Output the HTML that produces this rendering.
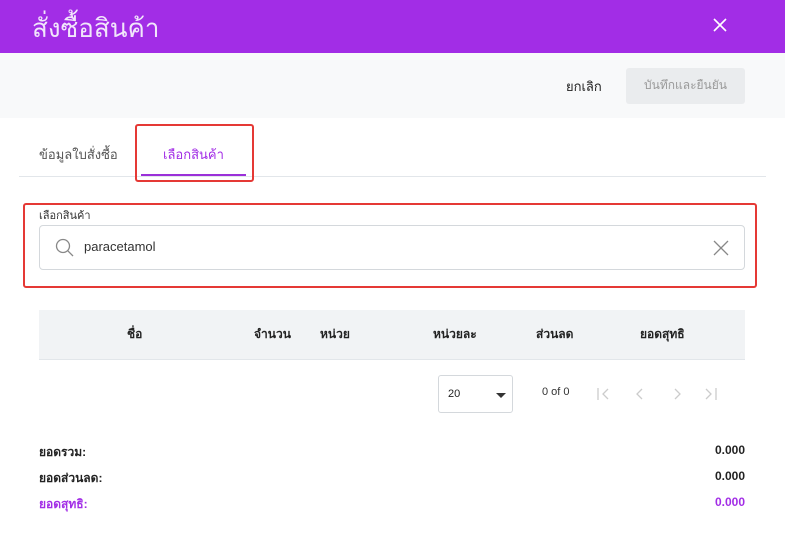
<!DOCTYPE html>
<html><head><meta charset="utf-8"><style>
*{box-sizing:border-box;margin:0;padding:0}
body{width:785px;height:559px;background:#fff;font-family:"Liberation Sans","Noto Sans CJK SC",sans-serif;position:relative;overflow:hidden;color:#222}
.hdr{position:absolute;left:0;top:0;width:785px;height:53px;background:#a22de6}
.hdr .t{position:absolute;left:32px;top:8px;font-size:26px;color:#f1e6fb}
.hdr .x{position:absolute;left:713px;top:18px}
.bar{position:absolute;left:0;top:53px;width:785px;height:65px;background:#f8f9fa}
.cancel{position:absolute;left:566px;top:76px;font-size:13px;color:#222}
.save{position:absolute;left:626px;top:68px;width:119px;height:36px;background:#eaecee;border-radius:3px;font-size:12px;color:#999;text-align:center;line-height:34px}
.tab1{position:absolute;left:39px;top:144px;font-size:13px;color:#555}
.tab2{position:absolute;left:163px;top:144px;font-size:13px;color:#a22de6}
.ul{position:absolute;left:141px;top:174px;width:105px;height:2px;background:#9b30d9}
.sep{position:absolute;left:19px;top:176px;width:747px;height:1px;background:#e2e6ea}
.red1{position:absolute;left:135px;top:124px;width:119px;height:58px;border:2px solid #e53935;border-radius:3px}
.red2{position:absolute;left:23px;top:203px;width:734px;height:85px;border:2px solid #e53935;border-radius:3px}
.lbl{position:absolute;left:39px;top:206px;font-size:11px;color:#333}
.inp{position:absolute;left:39px;top:225px;width:706px;height:45px;border:1px solid #d4d8dc;border-radius:4px}
.inp .v{position:absolute;left:44px;top:13px;font-size:13px;color:#333}
.th{position:absolute;left:39px;top:310px;width:706px;height:50px;background:#f1f3f5;border-bottom:1px solid #e2e6ea}
.th span{position:absolute;top:15px;font-size:12px;font-weight:bold;color:#222}
.sel{position:absolute;left:438px;top:375px;width:75px;height:38px;border:1px solid #d4d8dc;border-radius:3px}
.sel .n{position:absolute;left:9px;top:12px;font-size:11px}
.sel .a{position:absolute;left:57px;top:17px;width:0;height:0;border-left:5px solid transparent;border-right:5px solid transparent;border-top:5px solid #333}
.of{position:absolute;left:542px;top:386px;font-size:11px;color:#333}
.tot{position:absolute;font-size:12px;font-weight:bold;color:#222}
.r{right:40px;text-align:right}
</style></head><body>
<div class="hdr"><div class="t">สั่งซื้อสินค้า</div>
<svg class="x" width="14" height="14" viewBox="0 0 14 14"><path d="M1 1L13 13M13 1L1 13" stroke="#fff" stroke-width="1.6"/></svg></div>
<div class="bar"></div>
<div class="cancel">ยกเลิก</div>
<div class="save">บันทึกและยืนยัน</div>
<div class="tab1">ข้อมูลใบสั่งซื้อ</div>
<div class="tab2">เลือกสินค้า</div>
<div class="ul"></div>
<div class="sep"></div>
<div class="red1"></div>
<div class="red2"></div>
<div class="lbl">เลือกสินค้า</div>
<div class="inp">
<svg style="position:absolute;left:15px;top:12px" width="20" height="20" viewBox="0 0 20 20"><circle cx="8" cy="8" r="6.5" fill="none" stroke="#888" stroke-width="1.3"/><path d="M12.7 12.7L18 18" stroke="#888" stroke-width="1.3"/></svg>
<div class="v">paracetamol</div>
<svg style="position:absolute;left:672px;top:13px" width="18" height="18" viewBox="0 0 18 18"><path d="M2 2L16 16M16 2L2 16" stroke="#888" stroke-width="1.3"/></svg>
</div>
<div class="th">
<span style="left:88px">ชื่อ</span>
<span style="left:215px">จำนวน</span>
<span style="left:281px">หน่วย</span>
<span style="left:394px">หน่วยละ</span>
<span style="left:497px">ส่วนลด</span>
<span style="left:601px">ยอดสุทธิ</span>
</div>
<div class="sel"><div class="n">20</div><div class="a"></div></div>
<div class="of">0 of 0</div>
<svg style="position:absolute;left:596px;top:386px" width="130" height="16" viewBox="0 0 130 16" fill="none" stroke="#ccc" stroke-width="1.3">
<path d="M2 2V14M12 3L7 8L12 13"/>
<path d="M46 3L41 8L46 13"/>
<path d="M79 3L84 8L79 13"/>
<path d="M110 3L115 8L110 13M120 2V14"/>
</svg>
<div class="tot" style="left:39px;top:443px">ยอดรวม:</div>
<div class="tot r" style="top:443px">0.000</div>
<div class="tot" style="left:39px;top:469px">ยอดส่วนลด:</div>
<div class="tot r" style="top:469px">0.000</div>
<div class="tot" style="left:39px;top:495px;color:#a22de6">ยอดสุทธิ:</div>
<div class="tot r" style="top:495px;color:#a22de6">0.000</div>
</body></html>
